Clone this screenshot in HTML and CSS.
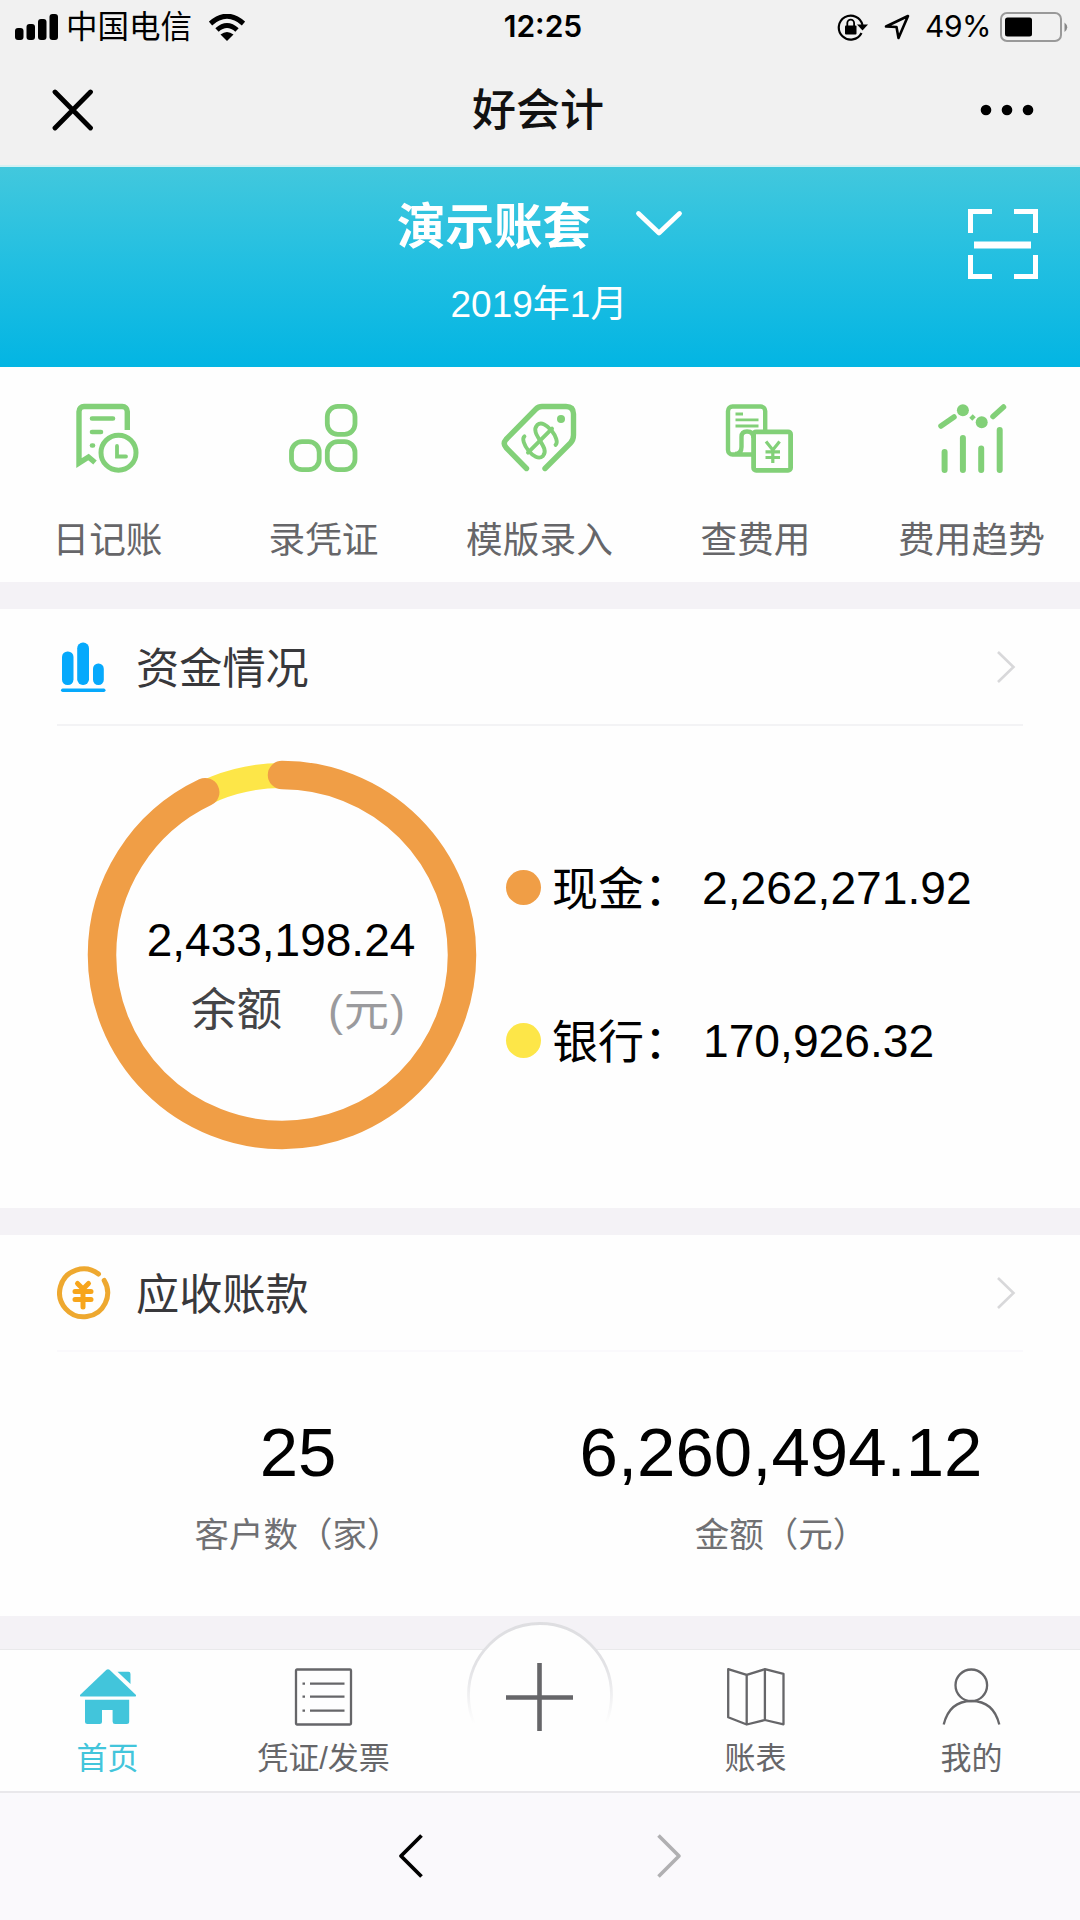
FILE: index.html
```html
<!DOCTYPE html>
<html lang="zh-CN">
<head>
<meta charset="utf-8">
<title>好会计</title>
<link rel="stylesheet" href="styles.css">
</head>
<body>
<div class="app">
  <div class="topbar">
    <div class="status">
      <div class="status-left">
        <svg class="signal" width="43" height="26" viewBox="0 0 43 26"><rect x="0" y="14" width="8.5" height="12" rx="3"/><rect x="11.5" y="10" width="8.5" height="16" rx="3"/><rect x="23" y="5" width="8.5" height="21" rx="3"/><rect x="34.5" y="0" width="8.5" height="26" rx="3"/></svg>
        <span class="carrier">中国电信</span>
        <svg class="wifi" width="36" height="27" viewBox="0 0 36 27"><path d="M1.5 9.5Q18-5 34.500 9.500M8 16Q18 7 28 16" fill="none" stroke="#000" stroke-width="5"/><path d="M11.500 20.500Q18 15.500 24.500 20.500L18 27Z"/></svg>
      </div>
      <span class="clock">12:25</span>
      <div class="status-right">
        <svg width="31" height="28" viewBox="0 0 31 28"><path d="M24.500 20A12 12 0 1 1 25.500 12" fill="none" stroke="#000" stroke-width="2.200"/><path d="M20 11.500H31L25.500 17.500Z"/><rect x="8" y="12.500" width="11.500" height="9" rx="1"/><path d="M10.300 13V10a3.400 3.400 0 0 1 6.800 0V13" fill="none" stroke="#000" stroke-width="1.800"/></svg>
        <svg class="locate" width="26" height="26" viewBox="0 0 26 26"><path d="M2 12.500L24 2L14.500 24L12.500 13Z" fill="none" stroke="#000" stroke-width="2.600" stroke-linejoin="round"/></svg>
        <span class="percent">49%</span>
        <svg class="battery" width="68" height="32" viewBox="0 0 68 32"><rect x="1" y="2" width="60" height="28" rx="6" fill="none" stroke="#999" stroke-width="2"/><rect x="5" y="6.500" width="27" height="19" rx="2.500"/><path d="M64.500 11.500Q70 16 64.500 21Z" fill="#888"/></svg>
      </div>
    </div>
    <div class="navbar">
      <svg width="42" height="42" viewBox="0 0 42 42"><path d="M3 3L38.500 39M38.500 3L3 39" stroke="#000" stroke-width="4.800" stroke-linecap="round"/></svg>
      <span class="nav-title">好会计</span>
      <svg width="54" height="12" viewBox="0 0 54 12"><circle cx="6" cy="6" r="5.300"/><circle cx="27" cy="6" r="5.300"/><circle cx="48" cy="6" r="5.300"/></svg>
    </div>
  </div>

  <header class="hero">
    <div class="account"><span>演示账套</span><svg width="48" height="28" viewBox="0 0 48 28"><path d="M3.500 4.500L24 24L44.500 4.500" fill="none" stroke="#fff" stroke-width="4.800" stroke-linecap="round" stroke-linejoin="round"/></svg></div>
    <div class="period">2019年1月</div>
    <svg class="scan" width="70" height="70" viewBox="0 0 70 70"><path d="M2.500 24V2.500H24M46 2.500H67.500V24M2.500 46V67.500H24M46 67.500H67.500V46" fill="none" stroke="#fff" stroke-width="5"/><path d="M6 36H63" stroke="#fff" stroke-width="7"/></svg>
  </header>

  <nav class="shortcuts">
    <a class="shortcut">
      <svg width="80" height="80" viewBox="0 0 80 80"><path d="M59.300 30V11.500a5 5 0 0 0-5-5H16a5 5 0 0 0-5 5V63L20.500 57L27 62.500" stroke-width="5.400"/><path d="M24 18.500H45M24 32H33" stroke-width="4.600" stroke-linecap="round"/><path d="M24 45.500H25" stroke-width="4.600" stroke-linecap="round"/><circle cx="50.500" cy="52.700" r="17.500" stroke-width="5"/><path d="M49 46V56.500H58" stroke-width="3.800" stroke-linecap="round"/></svg>
      <span>日记账</span>
    </a>
    <a class="shortcut">
      <svg width="80" height="80" viewBox="0 0 80 80"><g stroke-width="4.800"><rect x="43.300" y="6.300" width="27.700" height="28" rx="10.500"/><rect x="7.500" y="41.700" width="27.700" height="28" rx="10.500"/><rect x="43.300" y="41.700" width="27.700" height="28" rx="10.500"/></g></svg>
      <span>录凭证</span>
    </a>
    <a class="shortcut">
      <svg width="80" height="80" viewBox="0 0 80 80"><path d="M26.500 68.500L6 47.500Q2.500 43.500 6 39.500L36 9Q38.500 6.500 42 6.500H66Q73.500 6.500 73.500 14V35Q73.500 40 70.500 43L45 68.500" stroke-width="5.400" stroke-linecap="round" stroke-linejoin="round"/><circle class="solid" cx="61" cy="19" r="4"/><g transform="translate(40 40.600) rotate(45)" stroke-width="3.900" stroke-linecap="round"><path d="M0-17V17"/><path d="M14-8C15-15-12.500-20-13-9C-13 3 13-3 13 9C12.500 20-15 15-14 8"/></g></svg>
      <span>模版录入</span>
    </a>
    <a class="shortcut">
      <svg width="80" height="80" viewBox="0 0 80 80"><path d="M49.200 31V11a4.500 4.500 0 0 0-4.500-4.500H16.500A4.500 4.500 0 0 0 12 11V50a4.500 4.500 0 0 0 4.500 4.500H37M19 54Q25.500 54 25.500 47V37Q25.500 31.500 31 31.500Q37.500 31.500 37.500 38" stroke-width="4.400"/><rect x="37.600" y="31.800" width="37" height="38.500" rx="2.500" stroke-width="4.800"/><path d="M19.500 14H27M19.500 19.800H42.500M19.500 26H42.500" stroke-width="2.800"/><path d="M50 41.500L56.800 50L63.600 41.500M56.800 50V63M49.500 51.800H64M49.500 57.500H64" stroke-width="3.200"/></svg>
      <span>查费用</span>
    </a>
    <a class="shortcut">
      <svg width="80" height="80" viewBox="0 0 80 80"><path d="M12.600 52V70M30.900 38V70M49.200 48.500V70M67.700 30V70" stroke-width="6" stroke-linecap="round"/><path d="M9 26L22 17M61 16.500L71.500 7" stroke-width="5.500" stroke-linecap="round"/><path d="M39 16L42 19" stroke-width="5"/><circle class="solid" cx="30.900" cy="10.300" r="6"/><circle class="solid" cx="49.700" cy="22.300" r="6"/></svg>
      <span>费用趋势</span>
    </a>
  </nav>

  <section class="card funds">
    <div class="card-head">
      <svg width="54" height="54" viewBox="0 0 54 54" fill="#06a9fc"><rect x="5" y="11.500" width="11.500" height="33.500" rx="5.500"/><rect x="20.200" y="2.500" width="11.800" height="42.500" rx="5.700"/><rect x="36" y="23.500" width="10.800" height="21.500" rx="5.200"/><rect x="4" y="48.500" width="44.500" height="3.400" rx="1.700"/></svg>
      <h2>资金情况</h2>
      <svg class="more" width="20" height="34" viewBox="0 0 20 34"><path d="M2 2L17.500 17L2 32" fill="none" stroke="#d8d8da" stroke-width="2.600"/></svg>
    </div>
    <div class="funds-body">
      <div class="donut">
        <svg width="390" height="390" viewBox="0 0 390 390" fill="none"><g transform="rotate(-90 195 195)"><circle cx="195" cy="195" r="179.500" stroke="#fde648" stroke-width="25"/><circle cx="195" cy="195" r="180" stroke="#f09e46" stroke-width="28.500" stroke-linecap="round" pathLength="100" stroke-dasharray="92.980 7.020"/></g></svg>
        <div class="donut-text">
          <div class="total">2,433,198.24</div>
          <div class="total-label">余额<span>(元)</span></div>
        </div>
      </div>
      <div class="legend">
        <div class="legend-row"><i class="dot cash"></i><span class="legend-name">现金：</span><span class="amount">2,262,271.92</span></div>
        <div class="legend-row"><i class="dot bank"></i><span class="legend-name">银行：</span><span class="amount bank-amount">170,926.32</span></div>
      </div>
    </div>
  </section>

  <section class="card receivable">
    <div class="card-head">
      <svg width="54" height="54" viewBox="0 0 54 54" fill="none" stroke="#eea82f" stroke-width="5"><path d="M41.500 8A24 24 0 1 0 47.200 14.500" stroke-linecap="round"/><path d="M20.500 17.500L26 23L31.500 17.500M26 24V41M18 25.500H34M18 33.500H34" stroke="#f7a51b" stroke-linecap="round"/></svg>
      <h2>应收账款</h2>
      <svg class="more" width="20" height="34" viewBox="0 0 20 34"><path d="M2 2L17.500 17L2 32" fill="none" stroke="#d8d8da" stroke-width="2.600"/></svg>
    </div>
    <div class="stats">
      <div class="stat customers"><strong>25</strong><span>客户数（家）</span></div>
      <div class="stat"><strong>6,260,494.12</strong><span>金额（元）</span></div>
    </div>
  </section>

  <nav class="tabbar">
    <a class="tab active">
      <svg width="60" height="60" viewBox="0 0 60 60" fill="#42c5db"><path d="M28.500 2.800Q30 1.500 31.500 2.800L58 28Q58.500 29.500 57 29.500H3Q1.500 29.500 2 28Z"/><path d="M39.500 4.700H50.500Q52.500 4.700 52.500 7V17Z"/><path d="M7 32.700H51.200V54.500Q51.200 57 48.700 57H37Q34.600 57 34.600 54.500V43H24V54.500Q24 57 21.500 57H9.500Q7 57 7 54.500Z"/></svg>
      <span>首页</span>
    </a>
    <a class="tab">
      <svg width="60" height="60" viewBox="0 0 60 60" fill="none" stroke="#666669" stroke-width="2.300"><rect x="2" y="2.500" width="55" height="55" rx="1"/><path d="M16 16.700H50.500M16 29.700H50.500M16 43.700H50.500M8.500 16.700H11M8.500 29.700H11M8.500 43.700H11"/></svg>
      <span>凭证/发票</span>
    </a>
    <a class="add">
      <svg width="150" height="150" viewBox="0 0 150 150">
        <defs><linearGradient id="rim" x1="0" y1="0" x2="0" y2="1"><stop offset="0" stop-color="#dedee1"/><stop offset=".3" stop-color="#e2e2e5"/><stop offset=".7" stop-color="#fefefe"/></linearGradient></defs>
        <circle cx="75" cy="75" r="71.500" fill="#fefefe" stroke="url(#rim)" stroke-width="2.800"/>
        <path d="M41 77.500H108M74.500 43V111" stroke="#666669" stroke-width="4.600"/>
      </svg>
    </a>
    <a class="tab">
      <svg width="60" height="60" viewBox="0 0 60 60" fill="none" stroke="#666669" stroke-width="2.300" stroke-linejoin="round"><path d="M2.200 2.200L20.700 7.800L38.900 2.200L57.500 6.800V57.300L38.900 53L20.700 57.500L2.200 50.300ZM20.700 7.800V57.500M38.900 2.200V53"/></svg>
      <span>账表</span>
    </a>
    <a class="tab">
      <svg width="60" height="60" viewBox="0 0 60 60" fill="none" stroke="#666669" stroke-width="2.300"><circle cx="29.300" cy="18.300" r="15.800"/><path d="M1.700 57.500C6 40 17 34 29.500 34S53 40 57.300 57.500"/></svg>
      <span>我的</span>
    </a>
  </nav>

  <footer class="browser-nav">
    <svg width="26" height="46" viewBox="0 0 26 46"><path d="M23.500 2.500L3 23L23.500 43.500" fill="none" stroke="#000" stroke-width="3.800" stroke-linejoin="round"/></svg>
    <svg width="26" height="46" viewBox="0 0 26 46"><path d="M2.500 2.500L23 23L2.500 43.500" fill="none" stroke="#b0b0b2" stroke-width="3.600" stroke-linejoin="round"/></svg>
  </footer>
</div>
</body>
</html>
```
FILE: styles.css
```css
* { box-sizing: border-box; margin: 0; padding: 0; }

body {
  width: 1080px;
  height: 1920px;
  overflow: hidden;
  background: #f4f2f6;
  font-family: "Liberation Sans", "Noto Sans CJK SC", sans-serif;
  color: #000;
}

svg { display: block; flex: none; }
span, strong, h2 { white-space: nowrap; }

.app {
  display: flex;
  flex-direction: column;
  width: 1080px;
  height: 1920px;
}

.topbar {
  height: 167px;
  background: #f1f1f1;
  border-bottom: 2px solid #d5f1f3;
}

.status {
  display: grid;
  grid-template-columns: 1fr auto 1fr;
  align-items: center;
  height: 54px;
  padding: 0 12px 0 15px;
}
.status-left, .status-right { display: flex; align-items: center; }
.status-right { justify-content: flex-end; }
.carrier { margin-left: 8px; padding-top: 1px; font-size: 31.5px; line-height: 53px; }
.wifi { margin-left: 17px; }
.clock { font: 600 30px/52px Inter, sans-serif; margin: -2px 0 0 3px; }
.percent { margin: -2px 9px 0 15px; font: 400 30px/52px Inter, sans-serif; letter-spacing: -0.5px; }
.locate { margin-left: 16px; }

.navbar {
  display: grid;
  grid-template-columns: 1fr auto 1fr;
  align-items: center;
  height: 111px;
  padding: 0 46px 0 52px;
}
.navbar svg:last-child { justify-self: end; }
.nav-title { margin-right: 10px; padding-top: 3px; font-size: 44px; font-weight: 500; line-height: 60px; color: #111; }

.hero {
  position: relative;
  height: 200px;
  padding-top: 22px;
  background: linear-gradient(#42c8dd, #22bfe1 48%, #03b5e3);
  color: #fff;
  text-align: center;
}
.account {
  display: flex;
  justify-content: center;
  align-items: center;
  gap: 44px;
  height: 68px;
  font-size: 48.5px;
  font-weight: 700;
}
.account span { margin-top: -1px; }
.period { margin-top: 24px; padding-right: 2px; font-size: 37px; line-height: 48px; }
.scan { position: absolute; right: 42px; top: 42px; }

.shortcuts {
  display: grid;
  grid-template-columns: repeat(5, 216px);
  height: 215px;
  padding-top: 33px;
  background: #fefefe;
}
.shortcut { display: flex; flex-direction: column; align-items: center; }
.shortcut svg { fill: none; stroke: #82d078; }
.shortcut .solid { fill: #82d078; stroke: none; }
.shortcut span { margin-top: 37px; padding-right: 1px; font-size: 36.7px; line-height: 48px; color: #666669; }

.card { background: #fefefe; }
.card-head {
  display: flex;
  align-items: center;
  height: 117px;
  padding-top: 1px;
  margin: 0 57px 0 57px;
  border-bottom: 2px solid #f3f3f5;
}
.card-head h2 { margin-left: 25px; padding-top: 3px; font-size: 43.2px; font-weight: 400; line-height: 60px; color: #38383b; }
.more { margin-left: auto; margin-right: 7px; }

.funds { height: 599px; margin-top: 27px; }
.funds-body { display: flex; }
.donut { display: grid; margin: 34px 0 0 87px; }
.donut > * { grid-area: 1 / 1; }
.donut-text { padding-top: 150px; text-align: center; }
.total { font-size: 46px; line-height: 60px; padding-right: 2px; }
.total-label {
  display: flex;
  justify-content: center;
  gap: 46px;
  padding-left: 33px;
  margin-top: 11px;
  font-size: 45.5px;
  line-height: 60px;
  color: #444447;
}
.total-label span { color: #9a9a9d; font-size: 45px; letter-spacing: 1px; }
.legend { display: flex; flex-direction: column; gap: 91px; padding: 130px 0 0 29px; }
.legend-row { display: flex; align-items: center; height: 62px; font-size: 46.2px; line-height: 60px; }
.dot { width: 35px; height: 35px; border-radius: 50%; }
.cash { background: #f09e46; }
.bank { background: #fde648; }
.legend-name { width: 150px; margin-left: 11px; padding-top: 3px; font-size: 46px; }
.amount { padding-top: 2px; }
.bank-amount { margin-left: 1px; }

.receivable { height: 381px; margin-top: 27px; }
.receivable .card-head { border-color: #faf9fc; }
.stats {
  display: grid;
  grid-template-columns: 484px 484px;
  margin-left: 55px;
  padding-top: 61px;
}
.stat { display: flex; flex-direction: column; align-items: center; }
.customers { padding-left: 2px; }
.stat strong { font-size: 69px; font-weight: 400; line-height: 80px; }
.stat span { margin-top: 18px; font-size: 34.5px; line-height: 48px; color: #707073; }

.tabbar {
  display: grid;
  grid-template-columns: repeat(5, 216px);
  height: 142px;
  margin-top: 33px;
  border-top: 1px solid #e9e9eb;
  background: #fefefe;
}
.tab { display: flex; flex-direction: column; align-items: center; padding: 17px 1px 0 0; color: #666669; }
.tab span { margin-top: 12px; font-size: 31px; line-height: 40px; }
.active { color: #42c5db; }
.add { justify-self: center; margin-top: -30px; }

.browser-nav {
  display: flex;
  justify-content: center;
  align-items: center;
  gap: 232px;
  height: 129px;
  padding-bottom: 2px;
  border-top: 2px solid #e9e8eb;
  background: #faf9fc;
}
```
